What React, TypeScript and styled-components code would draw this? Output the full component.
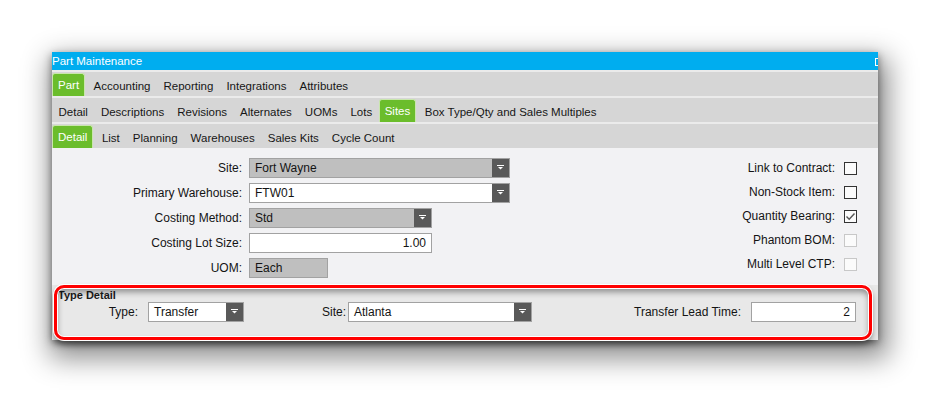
import { Fragment } from "react";
import styled, { createGlobalStyle } from "styled-components";

const GlobalStyle = createGlobalStyle`
  html, body {
    margin: 0;
    background: #ffffff;
    font-family: "Liberation Sans", Arial, sans-serif;
  }
`;

const Page = styled.div`
  min-height: 393px;
  box-sizing: border-box;
  padding: 52px 0 0 52px;
`;

const Window = styled.div`
  position: relative;
  display: flex;
  flex-direction: column;
  width: 826px;
  height: 288px;
  background: #f2f2f4;
  box-shadow: 4px 12px 26px 6px rgba(0, 0, 0, 0.45), 0 3px 8px rgba(0, 0, 0, 0.45);
`;

const TitleBar = styled.div`
  display: flex;
  align-items: center;
  justify-content: space-between;
  height: 18px;
  background: #00adef;
  color: #ffffff;
  font-size: 11.5px;
`;

const CloseMark = styled.span`
  width: 2px;
  height: 6px;
  margin-top: 2px;
  border: 1px solid #ffffff;
  border-right: none;
`;

const TabStack = styled.div`
  display: flex;
  flex-direction: column;
  gap: 2px;
  padding-top: 2px;
  background: #ebebeb;
`;

const TabRow = styled.div`
  display: flex;
  align-items: flex-start;
  height: 24px;
  overflow: hidden;
  background: #d6d6d6;
`;

const Tab = styled.div<{ $active?: boolean }>`
  font-size: 11.5px;
  white-space: nowrap;
  color: ${(p) => (p.$active ? "#ffffff" : "#161616")};
  background: ${(p) => (p.$active ? "#6bbd2c" : "transparent")};
  border: ${(p) => (p.$active ? "1px solid #c9e6ad" : "none")};
  border-bottom: none;
  border-radius: ${(p) => (p.$active ? "3px 3px 0 0" : "0")};
  margin-top: ${(p) => (p.$active ? "1px" : "0")};
  margin-right: ${(p) => (p.$active ? "2px" : "0")};
  padding: ${(p) => (p.$active ? "0 5px" : "3px 6.5px 0")};
  line-height: 22px;
  height: ${(p) => (p.$active ? "23px" : "24px")};
  box-sizing: border-box;
`;

const Content = styled.div`
  flex: 1;
  display: flex;
  justify-content: space-between;
  padding-right: 21px;
`;

const FormGrid = styled.div`
  display: grid;
  grid-template-columns: 190px auto;
  grid-auto-rows: 20px;
  column-gap: 7px;
  row-gap: 5px;
  padding-top: 10px;
  align-items: center;
  align-content: start;
`;

const Label = styled.label<{ $w?: number; $gap?: number }>`
  font-size: 12px;
  color: #141414;
  text-align: right;
  white-space: nowrap;
  ${(p) => (p.$w ? `width: ${p.$w}px;` : "")}
  ${(p) => (p.$gap !== undefined ? `margin-right: ${p.$gap}px;` : "")}
`;

const SelectBox = styled.div<{ $w: number; $gray?: boolean }>`
  display: flex;
  width: ${(p) => p.$w}px;
  height: 20px;
  box-sizing: border-box;
  border: 1px solid #a2a2a2;
  background: ${(p) => (p.$gray ? "#bfbfbf" : "#ffffff")};
`;

const Value = styled.div<{ $right?: boolean }>`
  flex: 1;
  padding: 0 5px;
  font-size: 12px;
  line-height: 18px;
  color: #141414;
  text-align: ${(p) => (p.$right ? "right" : "left")};
  white-space: nowrap;
`;

const DropButton = styled.div`
  display: flex;
  align-items: center;
  justify-content: center;
  width: 17px;
  background: #595959;
`;

const CheckList = styled.div`
  display: grid;
  grid-template-columns: auto 13px;
  grid-auto-rows: 24px;
  column-gap: 9px;
  align-items: center;
  align-content: start;
  padding-top: 8px;
`;

const CheckBox = styled.div<{ $disabled?: boolean }>`
  display: flex;
  align-items: center;
  justify-content: center;
  width: 13px;
  height: 13px;
  box-sizing: border-box;
  border: 1px solid ${(p) => (p.$disabled ? "#c8c8c8" : "#333333")};
  background: #fbfbfb;
`;

const GroupBox = styled.div`
  position: relative;
  height: 55px;
  box-sizing: border-box;
  padding: 4px 22px 0 0;
  background: #e8e8e8;
`;

const GroupTitle = styled.div`
  padding-left: 6px;
  font-size: 11px;
  font-weight: bold;
  line-height: 12px;
  color: #1a1a1a;
`;

const GroupRow = styled.div`
  display: flex;
  align-items: center;
  margin-top: 1px;
`;

const Spacer = styled.div`
  flex: 1;
`;

const Highlight = styled.div`
  position: absolute;
  left: 2px;
  right: 6px;
  top: 0;
  bottom: 0;
  border: 3px solid #ff0000;
  border-radius: 10px;
  pointer-events: none;
  box-shadow: 0 0 0 1px #ffffff, inset 0 0 0 1px #ffffff,
    0 4px 6px rgba(0, 0, 0, 0.45), inset 0 4px 6px rgba(0, 0, 0, 0.4);
`;

const Arrow = () => (
  <svg width="7" height="6" viewBox="0 0 7 6">
    <rect x="0" y="0" width="7" height="1" fill="#ffffff" />
    <path d="M1 2h5L3.5 4.5z" fill="#ffffff" />
  </svg>
);

const Select = ({ w, value, gray }: { w: number; value: string; gray?: boolean }) => (
  <SelectBox $w={w} $gray={gray}>
    <Value>{value}</Value>
    <DropButton>
      <Arrow />
    </DropButton>
  </SelectBox>
);

const Field = ({ w, value, gray, right }: { w: number; value: string; gray?: boolean; right?: boolean }) => (
  <SelectBox $w={w} $gray={gray}>
    <Value $right={right}>{value}</Value>
  </SelectBox>
);

const Check = ({ checked, disabled }: { checked?: boolean; disabled?: boolean }) => (
  <CheckBox $disabled={disabled}>
    {checked && (
      <svg width="11" height="11" viewBox="0 0 11 11">
        <polyline points="1.5,5.5 4.2,8.2 9.5,2.5" fill="none" stroke="#555555" strokeWidth="1.4" />
      </svg>
    )}
  </CheckBox>
);

const row1 = ["Accounting", "Reporting", "Integrations", "Attributes"];
const row2 = ["Detail", "Descriptions", "Revisions", "Alternates", "UOMs", "Lots"];
const row3 = ["List", "Planning", "Warehouses", "Sales Kits", "Cycle Count"];

const checks = [
  { label: "Link to Contract:" },
  { label: "Non-Stock Item:" },
  { label: "Quantity Bearing:", checked: true },
  { label: "Phantom BOM:", disabled: true },
  { label: "Multi Level CTP:", disabled: true },
];

export default function App() {
  return (
    <Page>
      <GlobalStyle />
      <Window>
        <TitleBar>
          <span>Part Maintenance</span>
          <CloseMark />
        </TitleBar>
        <TabStack>
          <TabRow>
            <Tab $active>Part</Tab>
            {row1.map((t) => (
              <Tab key={t}>{t}</Tab>
            ))}
          </TabRow>
          <TabRow>
            {row2.map((t) => (
              <Tab key={t}>{t}</Tab>
            ))}
            <Tab $active>Sites</Tab>
            <Tab>Box Type/Qty and Sales Multiples</Tab>
          </TabRow>
          <TabRow>
            <Tab $active>Detail</Tab>
            {row3.map((t) => (
              <Tab key={t}>{t}</Tab>
            ))}
          </TabRow>
        </TabStack>
        <Content>
          <FormGrid>
            <Label>Site:</Label>
            <Select w={261} value="Fort Wayne" gray />
            <Label>Primary Warehouse:</Label>
            <Select w={261} value="FTW01" />
            <Label>Costing Method:</Label>
            <Select w={183} value="Std" gray />
            <Label>Costing Lot Size:</Label>
            <Field w={183} value="1.00" right />
            <Label>UOM:</Label>
            <Field w={79} value="Each" gray />
          </FormGrid>
          <CheckList>
            {checks.map((c) => (
              <Fragment key={c.label}>
                <Label>{c.label}</Label>
                <Check checked={c.checked} disabled={c.disabled} />
              </Fragment>
            ))}
          </CheckList>
        </Content>
        <GroupBox>
          <GroupTitle>Type Detail</GroupTitle>
          <GroupRow>
            <Label $w={86} $gap={10}>Type:</Label>
            <Select w={96} value="Transfer" />
            <Label $w={102} $gap={2}>Site:</Label>
            <Select w={184} value="Atlanta" />
            <Spacer />
            <Label $gap={10}>Transfer Lead Time:</Label>
            <Field w={105} value="2" right />
          </GroupRow>
          <Highlight />
        </GroupBox>
      </Window>
    </Page>
  );
}
